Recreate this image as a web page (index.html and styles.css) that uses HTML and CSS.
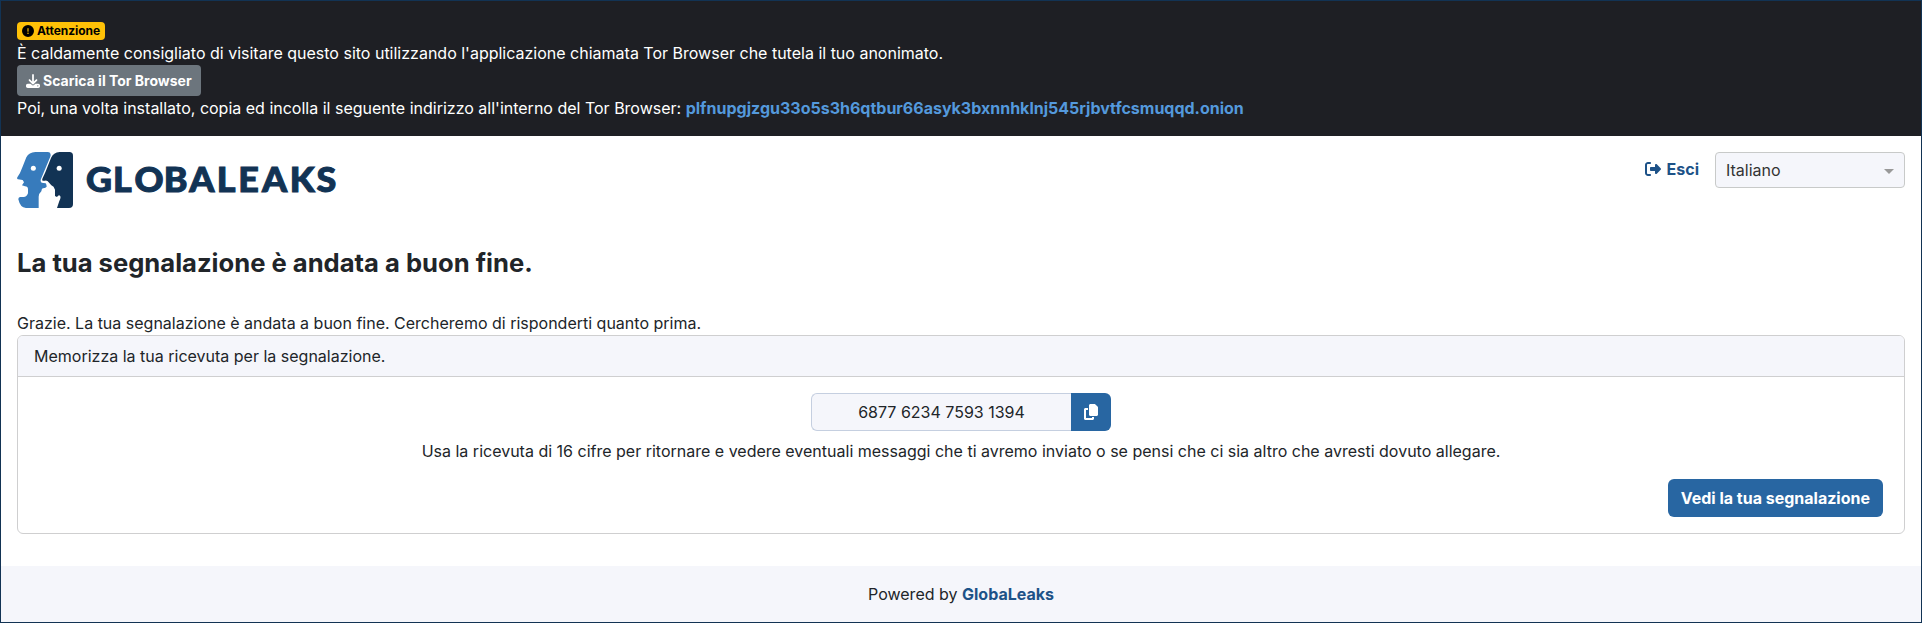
FILE: index.html
```html
<!DOCTYPE html>
<html lang="it">
<head>
<meta charset="utf-8">
<title>GlobaLeaks</title>
<link rel="stylesheet" href="styles.css">
</head>
<body>
<div class="page">
  <section class="banner">
    <div class="line"><span class="badge"><svg class="icon" viewBox="0 0 512 512"><path d="M256 512A256 256 0 1 0 256 0a256 256 0 1 0 0 512zm0-384c13.300 0 24 10.700 24 24l0 112c0 13.300-10.700 24-24 24s-24-10.700-24-24l0-112c0-13.300 10.700-24 24-24zM224 352a32 32 0 1 1 64 0 32 32 0 1 1 -64 0z"/></svg><span>Attenzione</span></span></div>
    <div class="line">È caldamente consigliato di visitare questo sito utilizzando l'applicazione chiamata Tor Browser che tutela il tuo anonimato.</div>
    <button class="btn btn-tor"><svg class="icon" viewBox="0 0 512 512"><path d="M288 32c0-17.700-14.300-32-32-32s-32 14.300-32 32l0 242.700-73.400-73.400c-12.500-12.500-32.800-12.500-45.300 0s-12.500 32.800 0 45.300l128 128c12.500 12.500 32.800 12.500 45.300 0l128-128c12.500-12.500 12.500-32.800 0-45.300s-32.800-12.500-45.300 0L288 274.700 288 32zM64 352c-35.300 0-64 28.700-64 64l0 32c0 35.300 28.700 64 64 64l384 0c35.300 0 64-28.700 64-64l0-32c0-35.300-28.700-64-64-64l-101.500 0-45.300 45.300c-25 25-65.500 25-90.500 0L165.500 352 64 352zm368 56a24 24 0 1 1 0 48 24 24 0 1 1 0-48z"/></svg><span>Scarica il Tor Browser</span></button>
    <div class="line">Poi, una volta installato, copia ed incolla il seguente indirizzo all'interno del Tor Browser: <a class="onion">plfnupgjzgu33o5s3h6qtbur66asyk3bxnnhklnj545rjbvtfcsmuqqd.onion</a></div>
  </section>

  <header class="header">
    <svg class="logo" viewBox="0 0 322 56" role="img" aria-label="GlobaLeaks">
      <g transform="translate(-17 -22) scale(.33333)">
        <path fill="#377bbc" d="M106 66H143Q152 66 152 76Q151 82 148 87L123 147Q120 155 125 158L137 160Q140 164 140 170L135 174Q131 173 126 176L124 184Q117 190 116 200V234H78Q60 232 56 211Q53 203 60 201H69Q80 202 84 190V178Q84 169 75 169L66 166L72 157L68 150L54 148Q50 147 52 142L60 129Q64 119 69 107L79 82Q87 67 106 66Z"/>
        <path fill="#123354" d="M179 66H208Q219 66 219 77V223Q219 234 207 234H171L178 213Q184 202 180 197Q176 193 171 201L165 198V179Q162 169 154 166L146 157Q143 151 135 152H128Q125 150 128 144L136 127L153 84Q160 68 179 66Z"/>
        <circle cx="100" cy="115" r="7.500" fill="#fff"/><circle cx="177.500" cy="115" r="7.500" fill="#fff"/>
      </g>
      <text class="wordmark" transform="scale(1.070 1)" x="64.500 89.800 109.900 137.200 160.900 186.700 206.800 229 255 280" y="39.600">GLOBALEAKS</text>
    </svg>
    <div class="tools">
      <a class="logout"><svg class="icon" viewBox="0 0 512 512"><path d="M377.900 105.900L500.700 228.700c7.200 7.200 11.300 17.100 11.300 27.300s-4.100 20.100-11.300 27.300L377.900 406.100c-6.400 6.400-15 9.900-24 9.900c-18.700 0-33.900-15.200-33.900-33.900l0-62.100-128 0c-17.700 0-32-14.300-32-32l0-64c0-17.700 14.300-32 32-32l128 0 0-62.100c0-18.700 15.200-33.900 33.900-33.900c9 0 17.600 3.600 24 9.900zM160 96L96 96c-17.700 0-32 14.300-32 32l0 256c0 17.700 14.300 32 32 32l64 0c17.700 0 32 14.300 32 32s-14.300 32-32 32l-64 0c-53 0-96-43-96-96L0 128C0 75 43 32 96 32l64 0c17.700 0 32 14.300 32 32s-14.300 32-32 32z"/></svg><span>Esci</span></a>
      <div class="select"><span>Italiano</span><span class="caret"></span></div>
    </div>
  </header>

  <main class="main">
    <h1 class="title">La tua segnalazione è andata a buon fine.</h1>
    <div class="line">Grazie. La tua segnalazione è andata a buon fine. Cercheremo di risponderti quanto prima.</div>
    <section class="card">
      <div class="card-header">Memorizza la tua ricevuta per la segnalazione.</div>
      <div class="card-body">
        <div class="receipt">
          <div class="code">6877 6234 7593 1394</div>
          <button class="copy" aria-label="Copia"><svg class="icon" viewBox="0 0 448 512"><path d="M208 0L332.100 0c12.700 0 24.900 5.100 33.900 14.100l67.900 67.900c9 9 14.100 21.200 14.100 33.900L448 336c0 26.500-21.500 48-48 48l-192 0c-26.500 0-48-21.500-48-48l0-288c0-26.500 21.500-48 48-48zM48 128l80 0 0 64-64 0 0 256 192 0 0-32 64 0 0 48c0 26.500-21.500 48-48 48L48 512c-26.500 0-48-21.500-48-48L0 176c0-26.500 21.500-48 48-48z"/></svg></button>
        </div>
        <p class="hint">Usa la ricevuta di 16 cifre per ritornare e vedere eventuali messaggi che ti avremo inviato o se pensi che ci sia altro che avresti dovuto allegare.</p>
        <button class="btn btn-view">Vedi la tua segnalazione</button>
      </div>
    </section>
  </main>

  <footer class="footer">Powered by&nbsp;<a class="brand">GlobaLeaks</a></footer>
</div>
</body>
</html>
```
FILE: styles.css
```css
* { box-sizing: border-box; }
body {
  margin: 0;
  font: 16px/24px Inter, sans-serif;
  color: #212529;
  background: #fff;
}
.page {
  display: flex;
  flex-direction: column;
  height: 623px;
  border: 1px solid #123354;
}
.icon { width: 1em; height: 1em; fill: currentColor; flex: none; }
.line { height: 24px; white-space: nowrap; }
.btn {
  font: inherit;
  font-weight: 700;
  color: #fff;
  border: 0;
  border-radius: 6px;
}
.banner {
  display: flex;
  flex-direction: column;
  align-items: flex-start;
  height: 135px;
  padding: 16px;
  background: #1e1f24;
  color: #fff;
}
.badge {
  display: flex;
  align-items: center;
  gap: 3px;
  width: 88px;
  height: 18px;
  margin-top: 5px;
  padding: 0 0 0 5px;
  border-radius: 4px;
  background: #ffc107;
  color: #000;
  font-size: 12px;
  font-weight: 700;
  line-height: 18px;
  letter-spacing: -.05px;
}
.btn-tor {
  display: flex;
  align-items: center;
  gap: 3px;
  width: 184px;
  height: 31px;
  padding: 0 0 0 9px;
  border-radius: 4px;
  background: #6c757d;
  font-size: 14px;
  line-height: 21px;
}
.onion { color: #5499dc; font-weight: 700; }
.header {
  display: flex;
  justify-content: space-between;
  align-items: flex-start;
  padding: 16px;
}
.logo { width: 322px; height: 56px; }
.wordmark {
  font: 900 33.500px Lato, sans-serif;
  fill: #123354;
  stroke: #123354;
  stroke-width: 1px;
}
.tools { display: flex; gap: 16px; }
.logout {
  display: flex;
  align-items: center;
  gap: 6px;
  height: 34px;
  color: #1d5288;
  font-weight: 700;
}
.select {
  display: flex;
  align-items: center;
  justify-content: space-between;
  width: 190px;
  height: 36px;
  padding: 0 10px;
  border: 1px solid #c8cac9;
  border-radius: 4px;
  background: #f5f6fb;
  color: #333;
}
.caret {
  margin-top: 2px;
  border: 5px solid transparent;
  border-top-color: #999;
  border-bottom: 0;
}
.main { padding: 0 16px; }
.title {
  margin: 22px 0 32px;
  font-size: 25.600px;
  line-height: 33px;
  font-weight: 700;
}
.card {
  height: 199px;
  border: 1px solid #cfcfd0;
  border-radius: 6px;
  overflow: hidden;
}
.card-header {
  height: 41px;
  padding: 8px 16px;
  border-bottom: 1px solid #cfcfd0;
  background: #f5f6fb;
}
.card-body {
  display: flex;
  flex-direction: column;
  align-items: center;
  padding: 16px;
}
.receipt { display: flex; width: 300px; height: 38px; }
.code {
  flex: 1;
  border: 1px solid #c5cfe0;
  border-right: 0;
  border-radius: 6px 0 0 6px;
  background: #f5f6fb;
  text-align: center;
  line-height: 36px;
}
.copy {
  display: flex;
  align-items: center;
  justify-content: center;
  width: 40px;
  padding: 0;
  border: 0;
  border-radius: 0 6px 6px 0;
  background: #2866a2;
  color: #fff;
  font-size: 16px;
}
.hint { margin: 8px 0 16px; }
.btn-view {
  align-self: flex-end;
  height: 38px;
  margin-right: 5px;
  padding: 0 13px;
  background: #2866a2;
}
.footer {
  display: flex;
  align-items: center;
  justify-content: center;
  height: 56px;
  margin-top: auto;
  background: #f5f6fb;
}
.brand { color: #1d5288; font-weight: 700; }
```
